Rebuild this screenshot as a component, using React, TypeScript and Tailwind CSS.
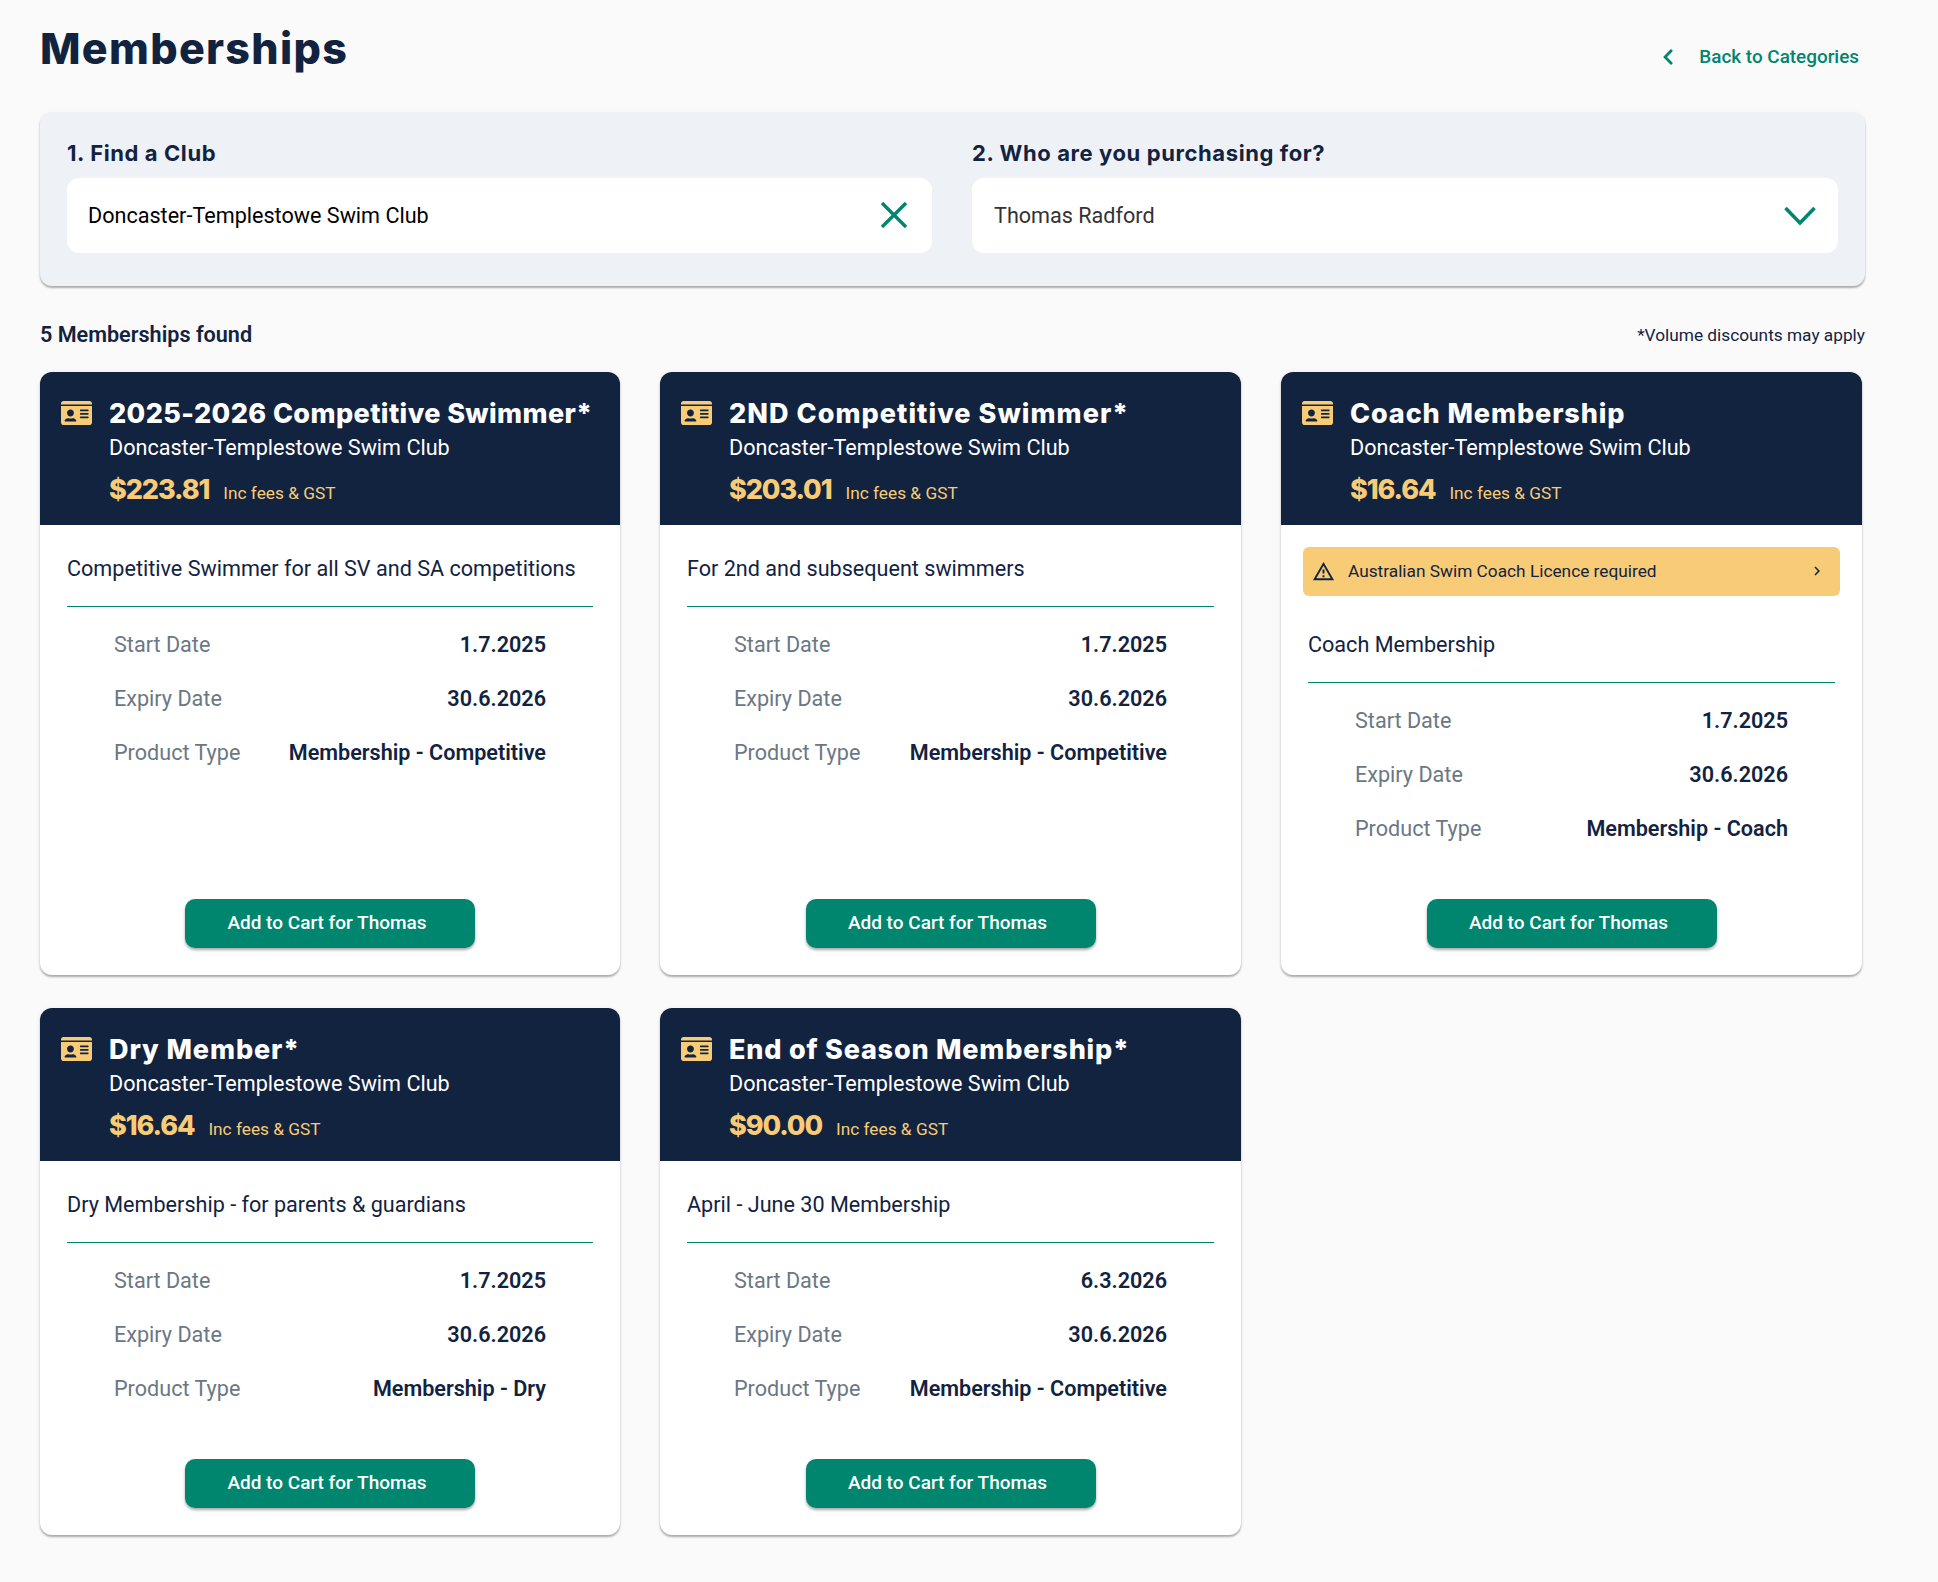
import React from "react";
import { FaIdCard, FaChevronLeft } from "react-icons/fa";
import { MdOutlineWarningAmber, MdChevronRight } from "react-icons/md";

type Card = {
  title: string;
  track: string;
  price: string;
  desc: string;
  start: string;
  type: string;
  alert?: string;
};

const cards: Card[] = [
  { title: "2025-2026 Competitive Swimmer*", track: "tracking-[0.4px]", price: "$223.81", desc: "Competitive Swimmer for all SV and SA competitions", start: "1.7.2025", type: "Membership - Competitive" },
  { title: "2ND Competitive Swimmer*", track: "tracking-[1.05px]", price: "$203.01", desc: "For 2nd and subsequent swimmers", start: "1.7.2025", type: "Membership - Competitive" },
  { title: "Coach Membership", track: "tracking-[0.9px]", price: "$16.64", desc: "Coach Membership", start: "1.7.2025", type: "Membership - Coach", alert: "Australian Swim Coach Licence required" },
  { title: "Dry Member*", track: "tracking-[0.9px]", price: "$16.64", desc: "Dry Membership - for parents & guardians", start: "1.7.2025", type: "Membership - Dry" },
  { title: "End of Season Membership*", track: "tracking-[0.8px]", price: "$90.00", desc: "April - June 30 Membership", start: "6.3.2026", type: "Membership - Competitive" },
];

const heading = "font-['Inter','Liberation_Sans',sans-serif]";

function Row({ label, value }: { label: string; value: string }) {
  return (
    <div className="flex h-[54px] items-center justify-between">
      <span className="text-[#6b7785]">{label}</span>
      <span className="font-semibold text-[#12233f]">{value}</span>
    </div>
  );
}

function MembershipCard({ card }: { card: Card }) {
  return (
    <div className="flex flex-col overflow-hidden rounded-xl bg-white shadow-[0_2px_2px_rgba(0,0,0,0.3),0_0_5px_rgba(0,0,0,0.05)]">
      <div className="flex h-[153px] bg-[#12233f] pl-[21px] pt-[25px] text-white">
        <FaIdCard className="mt-[-1px] mr-[17px] h-[34px] w-[31px] shrink-0 text-[#f8cb76]" />
        <div>
          <div className={`${heading} ${card.track} text-[27px] leading-[34px] font-extrabold whitespace-nowrap`}>{card.title}</div>
          <div className="mt-[3px] text-[21.6px] leading-[28px]">Doncaster-Templestowe Swim Club</div>
          <div className="mt-[11px] flex items-center text-[#f8cb76]">
            <span className={`${heading} text-[27px] leading-[34px] font-extrabold tracking-[-1.1px]`}>{card.price}</span>
            <span className="ml-[14px] mt-[6px] text-[17.28px] leading-[24px]">Inc fees &amp; GST</span>
          </div>
        </div>
      </div>
      {card.alert && (
        <div className="mx-[22px] mt-[22px] flex h-[49px] items-center rounded-md bg-[#f8cb76] pl-[9px] pr-[14px] text-[17.28px] text-[#12233f]">
          <MdOutlineWarningAmber className="h-[23px] w-[23px] shrink-0" />
          <span className="ml-[13px] flex-1">{card.alert}</span>
          <MdChevronRight className="mt-[-2px] h-[18px] w-[18px]" />
        </div>
      )}
      <div className="flex flex-1 flex-col px-[27px] pb-[27px] text-[21.6px]">
        <div className={`${card.alert ? "pt-[35px]" : "pt-[30px]"} pb-[23px] leading-[28px] text-[#12233f]`}>{card.desc}</div>
        <div className="border-t border-[#00856f]" />
        <div className="px-[47px] pt-[11px] pb-[43px]">
          <Row label="Start Date" value={card.start} />
          <Row label="Expiry Date" value="30.6.2026" />
          <Row label="Product Type" value={card.type} />
        </div>
        <button className="mx-auto mt-auto h-[49px] w-[290px] rounded-[10px] bg-[#00856f] pr-[6px] text-[19px] font-medium text-white shadow-[0_2px_3px_rgba(0,0,0,0.35)]">
          Add to Cart for Thomas
        </button>
      </div>
    </div>
  );
}

export default function App() {
  return (
    <div className="min-h-[1582px] w-full bg-[#fafafa] pl-10 pr-[73px] font-['Roboto','Liberation_Sans',sans-serif]">
      <div className="flex h-[112px] items-start justify-between">
        <h1 className={`${heading} mt-[22px] text-[43px] leading-[52px] font-extrabold tracking-[1.3px] text-[#12233f]`}>Memberships</h1>
        <a className="mt-[44px] mr-[6px] flex items-center text-[18.9px] leading-[25px] font-medium text-[#00856f]">
          <FaChevronLeft className="mr-[23px] h-[18px] w-[16px]" />
          Back to Categories
        </a>
      </div>

      <div className="grid h-[174px] grid-cols-[865px_866px] gap-x-10 rounded-xl bg-[#eef1f5] px-[27px] pt-[27px] shadow-[0_2px_2px_rgba(0,0,0,0.3),0_0_5px_rgba(0,0,0,0.04)]">
        <div>
          <div className={`${heading} text-[22px] leading-[28px] font-bold tracking-[0.6px] text-[#12233f]`}>1. Find a Club</div>
          <div className="mt-[11px] flex h-[75px] items-center justify-between rounded-xl bg-white pl-[21px] pr-[25px] text-[21.6px] text-black">
            <span className="mt-[1px]">Doncaster-Templestowe Swim Club</span>
            <svg className="mt-[-1px]" width="26" height="26" viewBox="0 0 26 26" fill="none" stroke="#00856f" strokeWidth="3.4">
              <path d="M1 1 L25 25 M25 1 L1 25" />
            </svg>
          </div>
        </div>
        <div>
          <div className={`${heading} text-[22px] leading-[28px] font-bold tracking-[0.6px] text-[#12233f]`}>2. Who are you purchasing for?</div>
          <div className="mt-[11px] flex h-[75px] items-center justify-between rounded-xl bg-white pl-[22px] pr-[22px] text-[21.6px] text-[#333]">
            <span className="mt-[1px]">Thomas Radford</span>
            <svg width="32" height="20" viewBox="0 0 32 20" fill="none" stroke="#00856f" strokeWidth="3.5">
              <path d="M1.5 2 L16 17 L30.5 2" />
            </svg>
          </div>
        </div>
      </div>

      <div className="flex h-[86px] items-center justify-between pt-[12px]">
        <span className="text-[21.6px] font-semibold text-[#12233f]">5 Memberships found</span>
        <span className="mt-[2px] text-[17.28px] text-[#12233f]">*Volume discounts may apply</span>
      </div>

      <div className="grid w-[1822px] grid-cols-[580px_581px_581px] gap-x-10 gap-y-[33px] pb-[46px]">
        {cards.map((c) => (
          <MembershipCard key={c.title} card={c} />
        ))}
      </div>
    </div>
  );
}
